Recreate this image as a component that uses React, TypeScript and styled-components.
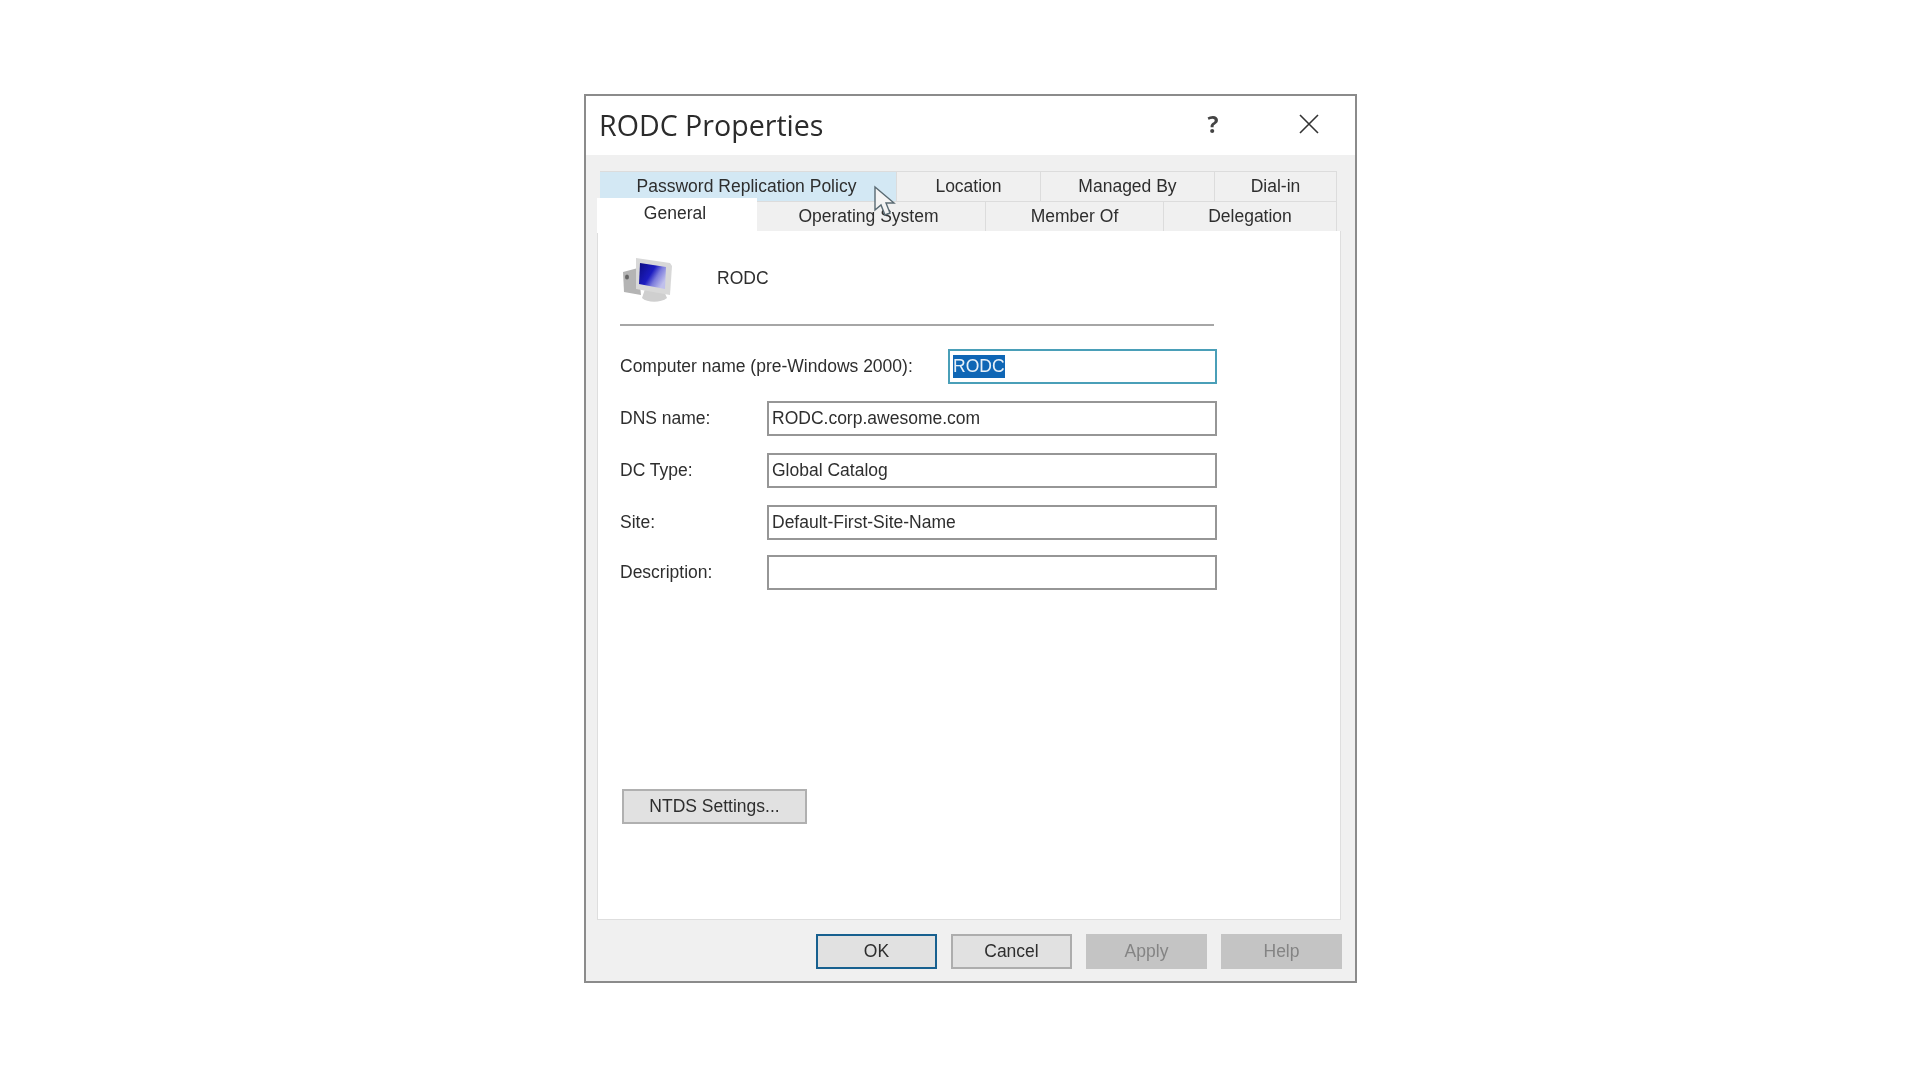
import React from "react"
import styled, { createGlobalStyle } from "styled-components"

const GlobalStyle = createGlobalStyle`
  html, body {
    margin: 0;
    background: #fff;
  }
`

const Page = styled.div`
  width: 1920px;
  height: 1080px;
  padding: 94px 0 0 584px;
  box-sizing: border-box;
  position: relative;
  overflow: hidden;
  font-family: "Liberation Sans", Arial, sans-serif;
  font-size: 17.5px;
  color: #2e2e2e;
  filter: blur(0.45px);
`

const Dialog = styled.div`
  width: 773px;
  height: 889px;
  box-sizing: border-box;
  border: 2px solid #8b8b8b;
  background: #f0f0f0;
  display: flex;
  flex-direction: column;
`

const TitleBar = styled.div`
  height: 59px;
  flex: none;
  box-sizing: border-box;
  background: #fff;
  display: flex;
  align-items: center;
  padding: 0 0 3px 13px;
`

const Title = styled.div`
  flex: 1;
  font-family: "Open Sans", sans-serif;
  font-size: 28.6px;
  color: #2b2b2b;
`

const HelpGlyph = styled.div`
  width: 30px;
  text-align: center;
  font-family: "Open Sans", sans-serif;
  font-size: 23px;
  font-weight: 700;
  color: #444;
  margin-right: 71px;
`

const CloseGlyph = styled.svg`
  width: 20px;
  height: 20px;
  margin-right: 36px;
`

const Body = styled.div`
  flex: 1;
  display: flex;
  flex-direction: column;
  padding: 16px 14px 0 11px;
`

const TabRow = styled.div`
  display: flex;
  height: 30px;
  padding-left: 3px;
`

const Tab = styled.div<{ $width: number; $hover?: boolean; $nudge?: number }>`
  width: ${(p) => p.$width}px;
  box-sizing: border-box;
  flex: none;
  display: flex;
  align-items: center;
  justify-content: center;
  padding-right: ${(p) => p.$nudge ?? 0}px;
  background: ${(p) => (p.$hover ? "#d3e8f4" : "#f0f0f0")};
  border: 1px solid #dcdcdc;
  border-left-width: 0;
  border-bottom-width: 0;
`

const ActiveTab = styled.div`
  width: 160px;
  height: 35px;
  margin: -3px 0 -2px -3px;
  box-sizing: border-box;
  flex: none;
  position: relative;
  z-index: 1;
  background: #fff;
  display: flex;
  align-items: center;
  justify-content: center;
  padding: 0 4px 4px 0;
`

const Panel = styled.div`
  width: 744px;
  height: 689px;
  flex: none;
  box-sizing: border-box;
  background: #fff;
  border: 1px solid #dedede;
  border-top: 0;
  padding: 25px 0 0 22px;
`

const Identity = styled.div`
  display: flex;
  align-items: center;
  gap: 44px;
  height: 46px;
  padding-left: 3px;
`

const IdentityName = styled.span`
  margin-top: -2px;
`

const Rule = styled.div`
  width: 594px;
  height: 2px;
  background: #a6a6a6;
  margin: 22px 0 23px;
`

const Rows = styled.div`
  display: flex;
  flex-direction: column;
  gap: 17px;
  width: 597px;
`

const Row = styled.div<{ $tight?: boolean }>`
  display: flex;
  align-items: center;
  justify-content: space-between;
  height: 35px;
  margin-top: ${(p) => (p.$tight ? "-2px" : "0")};
`

const Field = styled.div<{ $width: number; $focused?: boolean }>`
  width: ${(p) => p.$width}px;
  height: 100%;
  box-sizing: border-box;
  border: 2px solid ${(p) => (p.$focused ? "#4a9fb8" : "#969696")};
  background: #fff;
  display: flex;
  align-items: center;
  padding-left: 3px;
  white-space: nowrap;
`

const Selected = styled.span`
  background: #0f66b5;
  color: #e8f0f8;
  line-height: 23px;
`

const SettingsButton = styled.div`
  width: 185px;
  height: 35px;
  box-sizing: border-box;
  margin: 199px 0 0 2px;
  border: 2px solid #b0b0b0;
  background: #e1e1e1;
  display: flex;
  align-items: center;
  justify-content: center;
`

const Footer = styled.div`
  display: flex;
  justify-content: flex-end;
  gap: 14px;
  margin: 14px -1px 0 0;
`

const FooterButton = styled.div<{ $kind?: "default" | "disabled" }>`
  width: 121px;
  height: 35px;
  box-sizing: border-box;
  display: flex;
  align-items: center;
  justify-content: center;
  border: 2px solid
    ${(p) =>
      p.$kind === "default"
        ? "#17608f"
        : p.$kind === "disabled"
          ? "#c4c4c4"
          : "#adadad"};
  background: ${(p) => (p.$kind === "disabled" ? "#c4c4c4" : "#e1e1e1")};
  color: ${(p) => (p.$kind === "disabled" ? "#848484" : "#2e2e2e")};
`

const Cursor = styled.svg`
  position: absolute;
  left: 873px;
  top: 185px;
  width: 26px;
  height: 32px;
`

const ComputerIcon = () => (
  <svg width="50" height="46" viewBox="0 0 50 46">
    <defs>
      <linearGradient id="screen" x1="0" y1="0" x2="1" y2="0.6">
        <stop offset="0" stopColor="#0c0c80" />
        <stop offset="0.5" stopColor="#1c1cc0" />
        <stop offset="0.72" stopColor="#7c7cdc" />
        <stop offset="1" stopColor="#c0c0ec" />
      </linearGradient>
    </defs>
    <path d="M0 16l15-4 3 27-17-3z" fill="#b4b4b4" />
    <ellipse cx="4" cy="21" rx="2" ry="2.5" fill="#666" />
    <path d="M22 33h18l4 9c-6 5-20 5-25 0z" fill="#cfcfcf" />
    <path d="M13 2l34 5 2 3-2 29-34-6z" fill="#d8d8d8" />
    <path d="M17 7l26 4-1 22-26-5z" fill="url(#screen)" />
  </svg>
)

const tabsTop = [
  { label: "Password Replication Policy", width: 297, hover: true, nudge: 3 },
  { label: "Location", width: 144 },
  { label: "Managed By", width: 174 },
  { label: "Dial-in", width: 122 },
]

const tabsBottom = [
  { label: "Operating System", width: 229, nudge: 5 },
  { label: "Member Of", width: 178 },
  { label: "Delegation", width: 173 },
]

const fields = [
  { label: "DNS name:", value: "RODC.corp.awesome.com" },
  { label: "DC Type:", value: "Global Catalog" },
  { label: "Site:", value: "Default-First-Site-Name" },
  { label: "Description:", value: "", tight: true },
]

const App = () => (
  <Page>
    <GlobalStyle />
    <Dialog>
      <TitleBar>
        <Title>RODC Properties</Title>
        <HelpGlyph>?</HelpGlyph>
        <CloseGlyph viewBox="0 0 20 20">
          <path d="M1 1l18 18M19 1L1 19" stroke="#333" strokeWidth="1.6" />
        </CloseGlyph>
      </TitleBar>
      <Body>
        <TabRow>
          {tabsTop.map((tab) => (
            <Tab
              key={tab.label}
              $width={tab.width}
              $hover={tab.hover}
              $nudge={tab.nudge}
            >
              {tab.label}
            </Tab>
          ))}
        </TabRow>
        <TabRow>
          <ActiveTab>General</ActiveTab>
          {tabsBottom.map((tab) => (
            <Tab key={tab.label} $width={tab.width} $nudge={tab.nudge}>
              {tab.label}
            </Tab>
          ))}
        </TabRow>
        <Panel>
          <Identity>
            <ComputerIcon />
            <IdentityName>RODC</IdentityName>
          </Identity>
          <Rule />
          <Rows>
            <Row>
              <span>Computer name (pre-Windows 2000):</span>
              <Field $width={269} $focused>
                <Selected>RODC</Selected>
              </Field>
            </Row>
            {fields.map((field) => (
              <Row key={field.label} $tight={field.tight}>
                <span>{field.label}</span>
                <Field $width={450}>{field.value}</Field>
              </Row>
            ))}
          </Rows>
          <SettingsButton>NTDS Settings...</SettingsButton>
        </Panel>
        <Footer>
          <FooterButton $kind="default">OK</FooterButton>
          <FooterButton>Cancel</FooterButton>
          <FooterButton $kind="disabled">Apply</FooterButton>
          <FooterButton $kind="disabled">Help</FooterButton>
        </Footer>
      </Body>
    </Dialog>
    <Cursor viewBox="0 0 26 32">
      <path
        d="M2 2v23l6-5 4 10 5-2-4-10h8z"
        fill="#f4f4f4"
        stroke="#5a6a72"
        strokeWidth="1.4"
      />
    </Cursor>
  </Page>
)

export default App
